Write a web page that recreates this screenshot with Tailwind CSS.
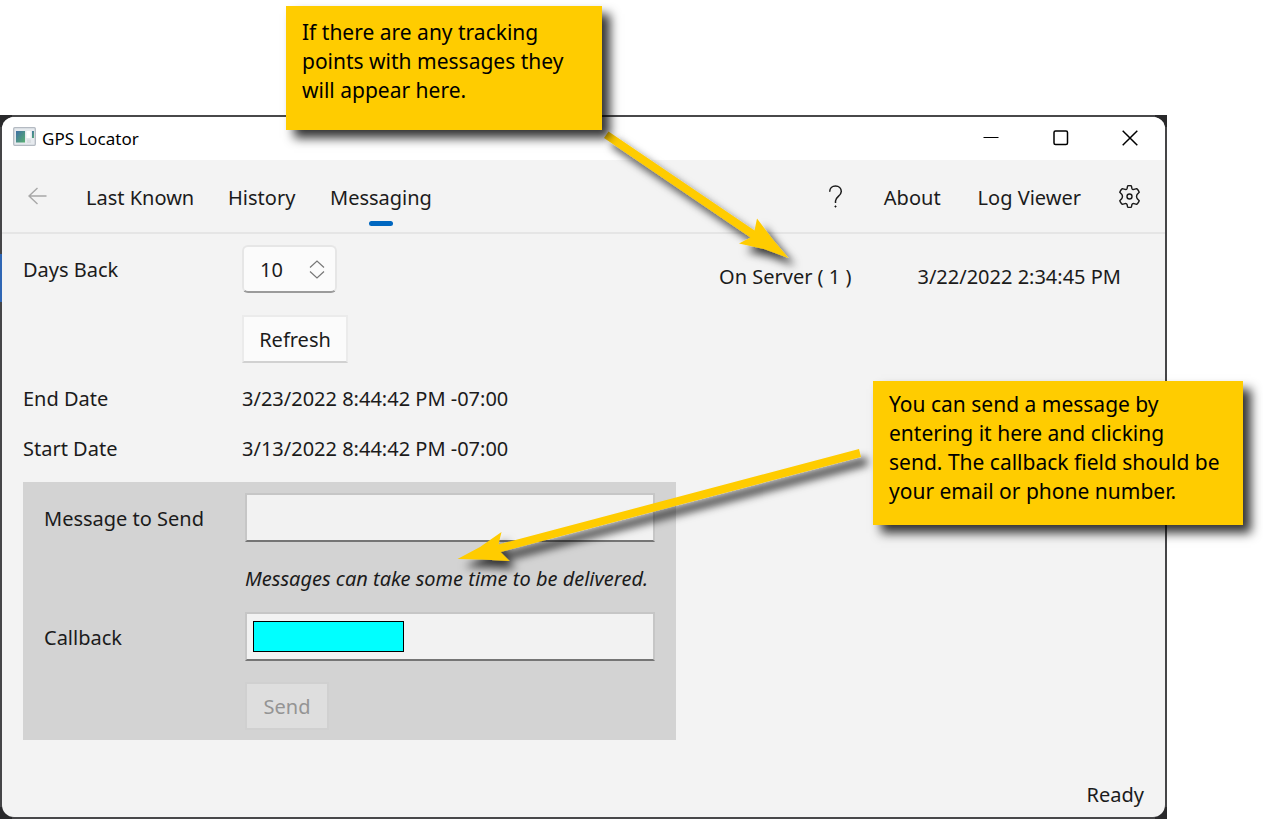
<!DOCTYPE html>
<html lang="en">
<head>
<meta charset="utf-8">
<title>GPS Locator</title>
<script src="https://cdn.jsdelivr.net/npm/@tailwindcss/browser@4"></script>
</head>
<body class="relative flex min-h-screen flex-col overflow-x-hidden bg-white pt-[115px] pr-24 font-['Noto_Sans','Open_Sans',sans-serif] text-[20px] leading-[26px] text-[#1b1b1b]">
<div class="relative flex grow flex-col bg-[#29292b] p-[2px]">
  <div class="absolute inset-x-3 inset-y-0 bg-[#48484a]"></div>
  <div class="absolute inset-x-0 inset-y-3 bg-[#454547]"></div>
  <div class="absolute top-[139px] left-0 h-12 w-[2px] bg-[#2f66b4]"></div>
  <main class="relative flex grow flex-col overflow-hidden rounded-xl bg-[#f3f3f3]">
    <header class="flex h-[43px] items-center bg-white pl-[11px] text-black">
      <svg class="mr-[5px] mb-1 h-[19px] w-6" viewBox="0 0 24 19" aria-hidden="true">
        <defs><linearGradient id="pane" x1="0" y1="0" x2="1" y2="1"><stop offset="0" stop-color="#3f6fa5"/><stop offset="1" stop-color="#58b070"/></linearGradient></defs>
        <rect x="0.7" y="0.7" width="21.6" height="17.6" rx="1" fill="#e6eaee" stroke="#b4bac2" stroke-width="1.3"/>
        <rect x="3" y="4" width="9" height="11.500" fill="url(#pane)"/>
        <rect x="13.500" y="4" width="4" height="7" fill="#fff"/>
        <rect x="19" y="4" width="2" height="7" fill="url(#pane)"/>
        <rect x="14" y="12.500" width="4" height="3.500" fill="#d9dde1"/>
      </svg>
      <h1 class="text-[17px] leading-6">GPS Locator</h1>
      <div class="ml-auto flex">
        <button class="mb-[2px] grid h-10 w-[70px] place-items-center" aria-label="Minimize"><svg class="h-4 w-4" viewBox="0 0 16 16"><path d="M0.500 7.500H15.500" stroke="#000"/></svg></button>
        <button class="mb-[2px] grid h-10 w-[69px] place-items-center" aria-label="Maximize"><svg class="h-4 w-4" viewBox="0 0 16 16"><rect x="1" y="1" width="13.500" height="13.500" rx="1.500" fill="none" stroke="#000" stroke-width="1.500"/></svg></button>
        <button class="mb-[2px] grid h-10 w-[70px] place-items-center" aria-label="Close"><svg class="h-4 w-4" viewBox="0 0 16 16"><path d="M0.700 0.700 15.300 15.300M15.300 0.700 0.700 15.300" stroke="#000" stroke-width="1.500"/></svg></button>
      </div>
    </header>
    <nav class="flex h-[74px] items-center border-b-2 border-[#e5e5e5] pr-6 pl-[26px]">
      <button class="w-[58px] shrink-0" aria-label="Back" disabled><svg class="h-[18px] w-[19px]" viewBox="0 0 19 18" fill="none" stroke="#a8a8a8" stroke-width="1.400"><path d="M18.500 9H1M9.500 1 1 9l8.500 8"/></svg></button>
      <a href="#" class="w-[142px] shrink-0 pt-[3px] whitespace-nowrap">Last Known</a>
      <a href="#" class="w-[102px] shrink-0 pt-[3px]">History</a>
      <a href="#" class="relative shrink-0 pt-[3px]" aria-current="page">Messaging<span class="absolute -bottom-[15px] left-1/2 h-[5px] w-6 -translate-x-1/2 rounded-full bg-[#0067c0]"></span></a>
      <div class="ml-auto flex items-center gap-[37px]">
        <button class="mr-1" aria-label="Help"><svg class="h-[23px] w-[15px]" viewBox="0 0 15 23" fill="none" stroke="#1b1b1b" stroke-width="1.500"><path d="M1.700 6.800C1.700 3.300 4.200 1 7.500 1s5.800 2.200 5.800 5.600c0 4.400-5.800 5.200-5.800 9.400v2"/><circle cx="7.500" cy="21.500" r=".7" fill="#1b1b1b" stroke-width=".7"/></svg></button>
        <a href="#" class="pt-[3px]">About</a>
        <a href="#" class="pt-[3px] whitespace-nowrap">Log Viewer</a>
        <button aria-label="Settings"><svg class="h-[23px] w-[23px]" viewBox="0 0 22 22" fill="none" stroke="#1b1b1b" stroke-width="1.350" stroke-linejoin="round"><path d="M9.200 .8Q11 .3 12.800 .8L13.300 3.300Q13.800 4.600 15.300 4.200L17.900 3.500Q19.600 4.800 20.300 7L18.500 8.800Q17 11 18.500 13.200L20.300 15Q19.600 17.200 17.900 18.500L15.300 17.800Q13.800 17.400 13.300 18.700L12.800 21.200Q11 21.700 9.200 21.200L8.700 18.700Q8.200 17.400 6.700 17.800L4.100 18.500Q2.400 17.200 1.700 15L3.500 13.200Q5 11 3.500 8.800L1.700 7Q2.400 4.800 4.100 3.500L6.700 4.200Q8.200 4.600 8.700 3.300Z"/><circle cx="11" cy="11" r="2.400"/></svg></button>
      </div>
    </nav>
    <div class="flex grow flex-col px-[21px] pt-[11px]">
      <section class="flex items-start justify-between">
        <div class="grid grid-cols-[219px_auto] items-center">
          <label for="days" class="pt-[2px]">Days Back</label>
          <div class="flex h-12 w-[95px] items-center rounded-md border-2 border-[#e6e6e6] border-b-[#9b9b9b] bg-[#fbfbfb] pr-[10px] pl-4">
            <input id="days" type="text" inputmode="numeric" value="10" class="w-full min-w-0 bg-transparent pt-[2px] outline-none">
            <svg class="h-[19px] w-4 shrink-0" viewBox="0 0 16 19" fill="none" stroke="#777" stroke-width="1.200" aria-hidden="true"><path d="M1 7.500 8 1l7 6.500M1 11.500 8 18l7-6.500"/></svg>
          </div>
          <button class="col-start-2 mt-[22px] h-12 w-[106px] border-2 border-[#ebebeb] border-b-[#d1d1d1] bg-[#fbfbfb] pt-px">Refresh</button>
          <div class="mt-[23px]">End Date</div><div class="mt-[23px] whitespace-nowrap">3/23/2022 8:44:42 PM -07:00</div>
          <div class="mt-6">Start Date</div><div class="mt-6 whitespace-nowrap">3/13/2022 8:44:42 PM -07:00</div>
        </div>
        <div class="mt-[19px] mr-[23px] flex gap-[66px] whitespace-nowrap"><div>On Server ( 1 )</div><div>3/22/2022 2:34:45 PM</div></div>
      </section>
      <form class="mt-5 grid w-[653px] grid-cols-[201px_410px] items-center bg-[#d3d3d3] px-[21px] pt-[11px] pb-[10px]">
        <label for="msg" class="pt-[2px]">Message to Send</label>
        <input id="msg" class="h-[49px] border-2 border-[#c6c6c6] border-b-[#757575] bg-[#f2f2f2] px-3 outline-none">
        <p class="col-start-2 mt-6 mb-5 whitespace-nowrap italic">Messages can take some time to be delivered.</p>
        <label for="callback" class="pt-[2px]">Callback</label>
        <div class="relative">
          <input id="callback" class="block h-[49px] w-full border-2 border-[#c6c6c6] border-b-[#757575] bg-[#f2f2f2] px-3 outline-none">
          <div class="absolute top-[9px] left-2 h-[31px] w-[151px] border border-black bg-[cyan]"></div>
        </div>
        <button type="button" disabled class="col-start-2 mt-[21px] h-12 w-[84px] border-2 border-[#d0d0d0] bg-[#dedede] pt-[2px] text-[#949494]">Send</button>
      </form>
      <footer class="mt-auto self-end pb-[9px]">Ready</footer>
    </div>
  </main>
</div>
<svg class="pointer-events-none absolute top-0 left-0 h-[819px] w-[1263px]" viewBox="0 0 1263 819" aria-hidden="true">
  <defs><filter id="shade" x="-10%" y="-20%" width="125%" height="150%"><feDropShadow dx="7" dy="8" stdDeviation="4" flood-color="#000" flood-opacity=".75"/></filter></defs>
  <g fill="#fc0" filter="url(#shade)">
    <path d="M608.500 131.500 754.500 230.500 757 218.500 772 238.500 788.500 258 764 249 739 243.500 750.500 237.500 604 138Z"/>
    <path d="M859 449 861 457 500.500 552 509.500 561 482 559.500 457.500 559 480 547 501.500 532 498.500 544.500Z"/>
  </g>
</svg>
<aside class="absolute top-1.5 left-[286px] h-[124px] w-[316px] bg-[#fc0] px-4 pt-3 text-[21px] leading-[29px] whitespace-nowrap text-black shadow-[8px_8px_10px_rgba(0,0,0,0.8)]">If there are any tracking<br>points with messages they<br>will appear here.</aside>
<aside class="absolute top-[381px] left-[873px] h-36 w-[370px] bg-[#fc0] px-4 pt-[9px] text-[21px] leading-[29px] whitespace-nowrap text-black shadow-[8px_8px_10px_rgba(0,0,0,0.8)]">You can send a message by<br>entering it here and clicking<br>send. The callback field should be<br>your email or phone number.</aside>
</body>
</html>
